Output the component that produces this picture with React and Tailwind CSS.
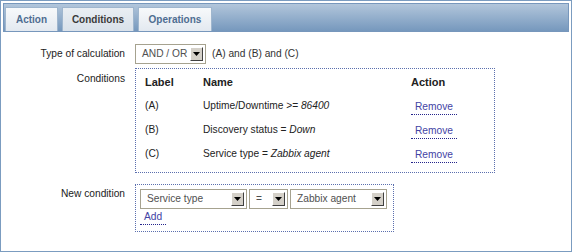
import { Fragment } from "react";

const Select = ({ value, width }) => (
  <div
    className={`${width} h-[20px] border border-[#a6a28f] bg-white flex items-center justify-between pl-[6px] pr-[2px] text-[#505050]`}
  >
    <span>{value}</span>
    <span className="w-[13px] h-[14px] bg-[#d4d0c8] border-t border-l border-t-white border-l-white border-b border-r border-b-[#404040] border-r-[#404040] flex items-center justify-center">
      <svg width="7" height="4" viewBox="0 0 7 4">
        <path d="M0 0 H7 L3.5 4 Z" fill="#000" />
      </svg>
    </span>
  </div>
);

const LinkText = ({ children }) => (
  <span className="inline-block px-[4px] pb-[1px] text-[#4343a4] border-b border-dotted border-[#25258c] leading-[12px]">
    {children}
  </span>
);

const conditions = [
  { label: "(A)", name: "Uptime/Downtime >= ", value: "86400" },
  { label: "(B)", name: "Discovery status = ", value: "Down" },
  { label: "(C)", name: "Service type = ", value: "Zabbix agent" },
];

const App = () => {
  return (
    <div className="w-[572px] h-[252px] border border-[#7b9cc0] p-[2px] bg-white font-['Liberation_Sans',Arial,sans-serif] text-[10.2px] text-[#222]">
      <div className="h-[29px] border border-[#7797bc] bg-gradient-to-b from-[#b2c6db] to-[#7698bd] flex items-end pl-[1px] gap-[4px]">
        <div className="w-[53px] h-[24px] border border-b-0 border-[#9fb6ce] bg-gradient-to-b from-[#f7f9fb] to-[#e3e9f0] flex items-center justify-center font-bold text-[10px] text-[#4e6d91]">
          Action
        </div>
        <div className="w-[72px] h-[24px] border border-b-0 border-[#9fb6ce] bg-gradient-to-b from-[#e9eef3] to-[#d9e1ea] flex items-center justify-center font-bold text-[10px] text-[#3a3a3a]">
          Conditions
        </div>
        <div className="w-[74px] h-[24px] border border-b-0 border-[#9fb6ce] bg-gradient-to-b from-[#f7f9fb] to-[#e3e9f0] flex items-center justify-center font-bold text-[10px] text-[#4e6d91]">
          Operations
        </div>
      </div>

      <div className="grid grid-cols-[122px_1fr] gap-x-[10px] pt-[12px] leading-[12px]">
        <div className="h-[20px] flex items-center justify-end">Type of calculation</div>
        <div className="flex items-center gap-[6px]">
          <Select value="AND / OR" width="w-[71px]" />
          <span className="text-[#333]">(A) and (B) and (C)</span>
        </div>

        <div className="mt-[4px] pt-[5px] text-right">Conditions</div>
        <div className="mt-[4px] w-[360px] h-[105px] border border-dotted border-[#5b6fae] pt-[1px] pb-[6px] pl-[9px]">
          <div className="grid grid-cols-[58px_208px_1fr] auto-rows-[24px] items-center">
            <div className="font-bold text-[11px]">Label</div>
            <div className="font-bold text-[11px]">Name</div>
            <div className="font-bold text-[11px]">Action</div>
            {conditions.map((c) => (
              <Fragment key={c.label}>
                <div>{c.label}</div>
                <div>
                  {c.name}
                  <i>{c.value}</i>
                </div>
                <div className="pt-[3px]">
                  <LinkText>Remove</LinkText>
                </div>
              </Fragment>
            ))}
          </div>
        </div>

        <div className="mt-[11px] pt-[4px] text-right">New condition</div>
        <div className="mt-[11px] w-[259px] h-[48px] border border-dotted border-[#5b6fae] pt-[4px] pl-[4px]">
          <div className="flex gap-[2px]">
            <Select value="Service type" width="w-[107px]" />
            <Select value="=" width="w-[39px]" />
            <Select value="Zabbix agent" width="w-[97px]" />
          </div>
          <div className="mt-[2px]">
            <LinkText>Add</LinkText>
          </div>
        </div>
      </div>
    </div>
  );
};

export default App;
